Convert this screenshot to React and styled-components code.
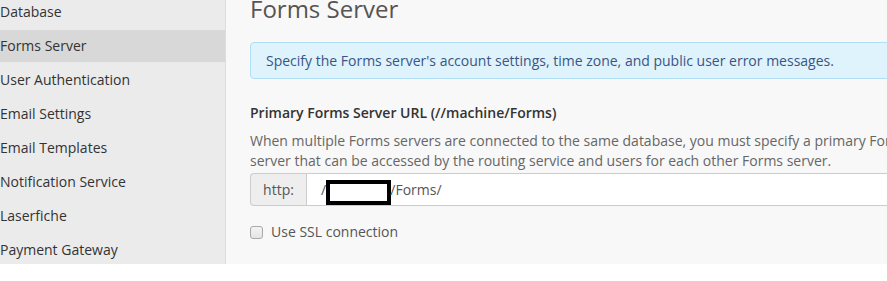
import React from 'react';
import styled, { createGlobalStyle } from 'styled-components';

const GlobalStyle = createGlobalStyle`
  html, body {
    margin: 0;
    padding: 0;
    background: #fff;
    font-family: "Open Sans", "Liberation Sans", sans-serif;
    font-size: 14px;
  }
`;

const PageWrapper = styled.div`
  display: flex;
  height: 264px;
  overflow: hidden;
`;

const Sidebar = styled.nav`
  flex: none;
  width: 225px;
  background: #ebebec;
  border-right: 1px solid #dcdcdc;
  overflow: hidden;
`;

const NavList = styled.ul`
  list-style: none;
  margin: -4px 0 0;
  padding: 0;
  display: flex;
  flex-direction: column;
  gap: 2px;
`;

const NavItem = styled.li`
  height: 32px;
  line-height: 32px;
  padding-left: 0;
  color: #333;
  font-size: 14px;
  background: ${(p) => (p.active ? '#d8d8d8' : 'transparent')};
`;

const Content = styled.main`
  flex: 1;
  min-width: 0;
  background: #f8f8f8;
  padding: 0 0 0 24px;
`;

const Heading = styled.h1`
  margin: -6px 0 0;
  font-size: 24px;
  line-height: 30px;
  font-weight: 400;
  color: #575451;
  white-space: nowrap;
`;

const InfoBox = styled.div`
  margin-top: 18px;
  margin-right: -10px;
  background: #dff3fc;
  border: 1px solid #afdef5;
  border-radius: 4px;
  padding: 8px 15px;
  line-height: 19px;
  color: #3a5585;
  white-space: nowrap;
`;

const FieldLabel = styled.div`
  margin-top: 24px;
  font-weight: 600;
  color: #333;
  line-height: 20px;
  white-space: nowrap;
`;

const HelpText = styled.p`
  margin: 8px 0 0;
  color: #666;
  line-height: 20px;
  white-space: nowrap;
`;

const InputGroup = styled.div`
  display: flex;
  height: 33px;
  margin: 2px -10px 0 0;
  box-sizing: border-box;
`;

const Addon = styled.span`
  flex: none;
  width: 56px;
  box-sizing: border-box;
  display: flex;
  align-items: center;
  justify-content: center;
  background: #eee;
  border: 1px solid #ccc;
  border-right: none;
  border-radius: 4px 0 0 4px;
  color: #555;
`;

const Field = styled.div`
  flex: 1;
  display: flex;
  align-items: center;
  background: #fff;
  border: 1px solid #ccc;
  padding-left: 14px;
  color: #555;
`;

const Redacted = styled.span`
  display: inline-block;
  width: 57px;
  height: 17px;
  border: 4px solid #000;
  background: #fff;
  margin: 6px -1px 0 -5px;
`;

const CheckRow = styled.label`
  display: flex;
  align-items: center;
  gap: 8px;
  margin-top: 14px;
  color: #555;
  line-height: 24px;
`;

const Box = styled.span`
  width: 13px;
  height: 13px;
  box-sizing: border-box;
  border: 1px solid #a9a9a9;
  border-radius: 3px;
  background: linear-gradient(#f4f4f4, #e4e4e4);
`;

const navItems = [
  'Database',
  'Forms Server',
  'User Authentication',
  'Email Settings',
  'Email Templates',
  'Notification Service',
  'Laserfiche',
  'Payment Gateway',
];

export default function App() {
  return (
    <>
      <GlobalStyle />
      <PageWrapper>
        <Sidebar>
          <NavList>
            {navItems.map((item) => (
              <NavItem key={item} active={item === 'Forms Server'}>
                {item}
              </NavItem>
            ))}
          </NavList>
        </Sidebar>
        <Content>
          <Heading>Forms Server</Heading>
          <InfoBox>
            Specify the Forms server's account settings, time zone, and public user error messages.
          </InfoBox>
          <FieldLabel>Primary Forms Server URL (//machine/Forms)</FieldLabel>
          <HelpText>
            When multiple Forms servers are connected to the same database, you must specify a primary Forms
            <br />
            server that can be accessed by the routing service and users for each other Forms server.
          </HelpText>
          <InputGroup>
            <Addon>http:</Addon>
            <Field>
              //<Redacted />/Forms/
            </Field>
          </InputGroup>
          <CheckRow>
            <Box />
            Use SSL connection
          </CheckRow>
        </Content>
      </PageWrapper>
    </>
  );
}
